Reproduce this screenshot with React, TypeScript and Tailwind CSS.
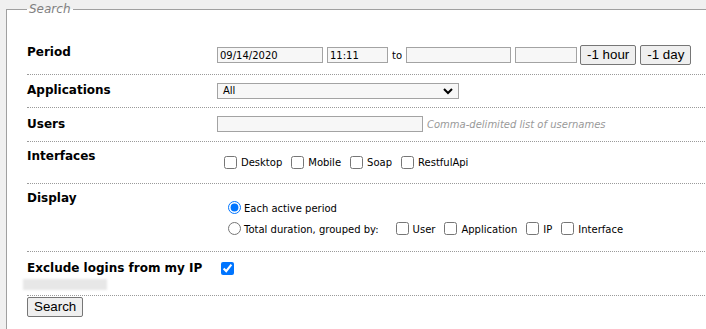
import type { ReactNode } from "react";

const verdana = { fontFamily: '"DejaVu Sans", Verdana, sans-serif' };
const arial = { fontFamily: '"Liberation Sans", Arial, sans-serif' };

type RowProps = {
  label: string;
  height: string;
  labelPad: string;
  children: ReactNode;
  extra?: ReactNode;
};

function Row({ label, height, labelPad, children, extra }: RowProps) {
  return (
    <div className={`flex border-b border-dotted border-[#9a9a9a] ${height}`}>
      <div className={`w-[190px] shrink-0 ${labelPad}`}>
        <div className="text-[12px] font-bold leading-[16px] text-black">{label}</div>
        {extra}
      </div>
      <div className="flex-1">{children}</div>
    </div>
  );
}

function Check({ label, checked = false }: { label: string; checked?: boolean }) {
  return (
    <label className="flex items-center text-[10px] leading-[13px] text-black">
      <input type="checkbox" defaultChecked={checked} className="m-0 mr-[4px] h-[13px] w-[13px]" />
      <span className="pt-[1px]">{label}</span>
    </label>
  );
}

const textInput = "h-[16px] border border-[#a3a3a3] bg-[#f7f7f7] px-[2px] text-[10px] leading-[14px] text-black outline-none";
const button = "h-[20px] rounded-[2px] border border-[#767676] bg-[#efefef] px-[6px] text-[13.33px] leading-[18px] text-black";

export default function App() {
  return (
    <div className="h-[329px] w-[706px] overflow-hidden bg-[#f0f0f0]" style={verdana}>
      <fieldset className="ml-[6px] mt-[1px] w-[740px] min-w-0 border border-[#a0a0a0] bg-white pb-[40px] pl-[20px]">
        <legend className="px-[2px] text-[12px] italic leading-[16px] text-[#808080]">Search</legend>

        <Row label="Period" height="h-[58px]" labelPad="pt-[27px]">
          <div className="flex items-center pt-[28px]">
            <input className={`${textInput} w-[106px]`} defaultValue="09/14/2020" style={verdana} />
            <input className={`${textInput} ml-[4px] w-[61px]`} defaultValue="11:11" style={verdana} />
            <span className="mx-[4px] text-[10px] text-black">to</span>
            <input className={`${textInput} w-[105px]`} style={verdana} />
            <input className={`${textInput} ml-[4px] w-[62px]`} style={verdana} />
            <button className={`${button} ml-[3px]`} style={arial}>-1 hour</button>
            <button className={`${button} ml-[4px]`} style={arial}>-1 day</button>
          </div>
        </Row>

        <Row label="Applications" height="h-[33px]" labelPad="pt-[7px]">
          <div className="pt-[8px]">
            <div className="relative h-[16px] w-[242px] border border-[#a3a3a3] bg-[#f7f7f7]">
              <span className="absolute left-[5px] top-0 text-[10px] leading-[14px] text-black">All</span>
              <svg className="absolute right-[5px] top-[4px]" width="10" height="7" viewBox="0 0 10 7">
                <polyline points="1,1 5,5 9,1" fill="none" stroke="#000" strokeWidth="2" />
              </svg>
            </div>
          </div>
        </Row>

        <Row label="Users" height="h-[34px]" labelPad="pt-[8px]">
          <div className="flex items-center pt-[8px]">
            <input className={`${textInput} w-[206px]`} style={verdana} />
            <span className="ml-[4px] text-[10px] italic text-[#999]">Comma-delimited list of usernames</span>
          </div>
        </Row>

        <Row label="Interfaces" height="h-[42px]" labelPad="pt-[6px]">
          <div className="flex items-center gap-[9px] pl-[7px] pt-[13px]">
            <Check label="Desktop" />
            <Check label="Mobile" />
            <Check label="Soap" />
            <Check label="RestfulApi" />
          </div>
        </Row>

        <Row label="Display" height="h-[68px]" labelPad="pt-[6px]">
          <div className="pl-[11px] pt-[13px] text-[10px] text-black">
            <label className="flex h-[21px] items-center">
              <input type="radio" name="display" defaultChecked className="m-0 mr-[3px] h-[13px] w-[13px]" />
              <span className="pt-[2px]">Each active period</span>
            </label>
            <div className="flex h-[21px] items-center">
              <label className="flex items-center">
                <input type="radio" name="display" className="m-0 mr-[3px] h-[13px] w-[13px]" />
                <span className="pt-[2px]">Total duration, grouped by:</span>
              </label>
              <div className="ml-[17px] flex items-center gap-[9px]">
                <Check label="User" />
                <Check label="Application" />
                <Check label="IP" />
                <Check label="Interface" />
              </div>
            </div>
          </div>
        </Row>

        <Row
          label="Exclude logins from my IP"
          height="h-[44px]"
          labelPad="pt-[8px]"
          extra={<div className="-ml-[4px] mt-[3px] h-[11px] w-[84px] bg-[#e7e7e7] blur-[1px]" />}
        >
          <div className="pl-[4px] pt-[10px]">
            <input type="checkbox" defaultChecked className="m-0 block h-[13px] w-[13px]" />
          </div>
        </Row>

        <div className="flex pt-[1px]">
          <button className={`${button} block`} style={arial}>Search</button>
        </div>
      </fieldset>
    </div>
  );
}
